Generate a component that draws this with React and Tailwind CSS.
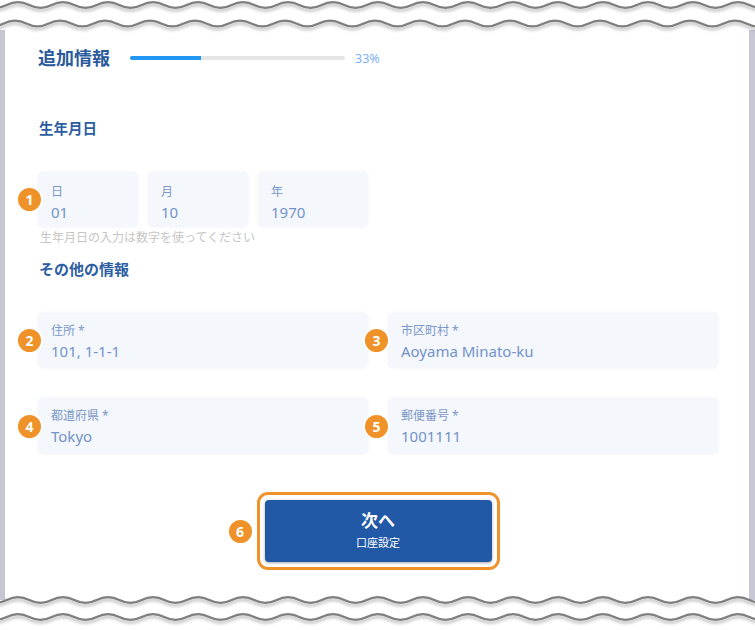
import React from "react";

function wavePath(mid, amp, wl, peakX, width) {
  let x0 = peakX - wl / 4;
  while (x0 > -wl) x0 -= wl;
  let d = `M ${x0} ${mid} Q ${x0 + wl / 4} ${mid - 2 * amp} ${x0 + wl / 2} ${mid}`;
  let x = x0 + wl / 2;
  while (x < width + wl) {
    x += wl / 2;
    d += ` T ${x} ${mid}`;
  }
  return d;
}

function Waves({ lines, height, className }) {
  return (
    <svg width="755" height={height} className={className} style={{ overflow: "visible" }}>
      <defs>
        <filter id="wshadow" x="-5%" y="-100%" width="110%" height="400%">
          <feDropShadow dx="0" dy="2.5" stdDeviation="1.6" floodColor="#000" floodOpacity="0.3" />
        </filter>
      </defs>
      {lines.map((l, i) => (
        <path
          key={i}
          d={wavePath(l.mid, 2.8, 45, l.peak, 755)}
          fill="none"
          stroke="#7f7f7f"
          strokeWidth="2.2"
          filter="url(#wshadow)"
        />
      ))}
    </svg>
  );
}

function Badge({ n, className }) {
  return (
    <div
      className={
        "absolute w-[27px] h-[27px] rounded-full bg-[#ef9229] border-[2px] border-white flex items-center justify-center text-white text-[14px] font-bold leading-none " +
        className
      }
    >
      {n}
    </div>
  );
}

function Field({ label, value, className }) {
  return (
    <div
      className={
        "bg-[#f4f7fc] rounded-[5px] shadow-[0_0_3px_rgba(120,140,170,0.12)] pl-[13px] flex flex-col " +
        className
      }
    >
      <div className="text-[12px] leading-[16px] text-[#7d97c6]">{label}</div>
      <div className="text-[15px] leading-[20px] text-[#7393c9] mt-[2px]">{value}</div>
    </div>
  );
}

export default function App() {
  return (
    <div
      className="w-[755px] h-[630px] bg-white overflow-hidden flex flex-col"
      style={{ fontFamily: '"Noto Sans", "Noto Sans CJK JP", sans-serif' }}
    >
      <Waves height={30} lines={[{ mid: 5, peak: 18 }, { mid: 23.5, peak: 15 }]} className="shrink-0 relative z-10" />
      <div className="h-[570px] flex shrink-0">
        <div className="w-[5px] bg-[#c6c6d4]" />
        <div className="flex-1 flex flex-col pl-[33px] pr-[31px] pt-[16px]">
          <div className="flex items-center h-[24px]">
            <div className="text-[18px] leading-[24px] font-bold text-[#2b5a9c]">追加情報</div>
            <div className="ml-[20px] w-[215px] h-[4px] bg-[#e6e6e6] rounded-full overflow-hidden">
              <div className="w-[71px] h-full bg-[#2196f3]" />
            </div>
            <div className="ml-[10px] text-[12.5px] text-[#7fb2f2] mt-[2px]">33%</div>
          </div>

          <div className="mt-[48px] text-[14.5px] leading-[20px] font-bold text-[#2d5ea3] pl-[1px]">生年月日</div>

          <div className="mt-[34px] flex gap-[10px] relative">
            <Badge n="1" className="left-[-22px] top-[14px]" />
            <Field label="日" value="01" className="w-[100px] h-[55px] pt-[12px]" />
            <Field label="月" value="10" className="w-[100px] h-[55px] pt-[12px]" />
            <Field label="年" value="1970" className="w-[110px] h-[55px] pt-[12px]" />
          </div>

          <div className="mt-[3px] text-[12px] leading-[16px] text-[#c6c6c6] pl-[2px]">生年月日の入力は数字を使ってください</div>

          <div className="mt-[13px] text-[15px] leading-[20px] font-bold text-[#2d5ea3] pl-[1px]">その他の情報</div>

          <div className="mt-[34px] grid grid-cols-2 gap-x-[20px] gap-y-[30px] w-[680px]">
            <div className="relative">
              <Badge n="2" className="left-[-22px] top-[14px]" />
              <Field label="住所 *" value="101, 1-1-1" className="h-[55px] pt-[10px]" />
            </div>
            <div className="relative">
              <Badge n="3" className="left-[-25px] top-[14px]" />
              <Field label="市区町村 *" value="Aoyama Minato-ku" className="h-[55px] pt-[10px]" />
            </div>
            <div className="relative">
              <Badge n="4" className="left-[-22px] top-[15px]" />
              <Field label="都道府県 *" value="Tokyo" className="h-[56px] pt-[10px]" />
            </div>
            <div className="relative">
              <Badge n="5" className="left-[-25px] top-[15px]" />
              <Field label="郵便番号 *" value="1001111" className="h-[56px] pt-[10px]" />
            </div>
          </div>

          <div className="mt-[38px] flex justify-center">
            <div className="relative">
              <Badge n="6" className="left-[-30px] top-[26px]" />
              <div className="w-[243px] h-[78px] rounded-[11px] border-[3px] border-[#ef9229] p-[5px]">
                <button className="w-full h-full rounded-[4px] bg-[#2159a6] shadow-[0_1px_3px_rgba(0,0,0,0.35)] flex flex-col items-center justify-center text-white">
                  <span className="text-[17px] leading-[22px] font-bold mt-[-2px]">次へ</span>
                  <span className="text-[11px] leading-[14px] mt-[4px]">口座設定</span>
                </button>
              </div>
            </div>
          </div>
        </div>
        <div className="w-[6px] bg-[#c6c6d4]" />
      </div>
      <Waves height={30} lines={[{ mid: 0, peak: 18 }, { mid: 17, peak: 18 }]} className="shrink-0 relative z-10" />
    </div>
  );
}
